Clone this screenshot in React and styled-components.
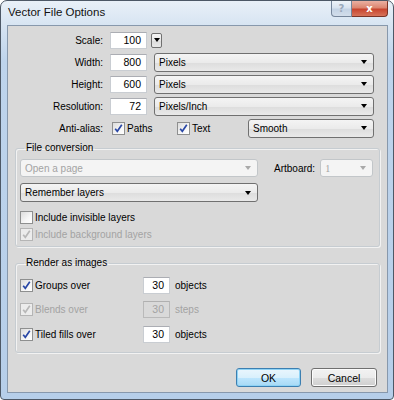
import React from 'react';
import styled, { createGlobalStyle } from 'styled-components';

const Global = createGlobalStyle`
  html, body { margin: 0; padding: 0; background: #fff; }
  body { font-family: "Liberation Sans", Arial, sans-serif; font-size: 10px; color: #000; }
  * { box-sizing: border-box; }
`;

const Window = styled.div`
  width: 394px;
  height: 400px;
  border: 1px solid #4d5866;
  border-radius: 7px 7px 4px 4px;
  background: linear-gradient(180deg, #e9f0f8 0px, #d7e4f2 24px, #bed4ec 60px, #b6cee9 100%);
  display: flex;
  flex-direction: column;
  overflow: hidden;
`;

const TitleBar = styled.div`
  height: 24px;
  display: flex;
  align-items: flex-start;
  padding-left: 7px;
  flex-shrink: 0;
`;

const Title = styled.div`
  font-size: 11.5px;
  line-height: 22px;
  color: #111;
  flex: 1;
`;

const Controls = styled.div`
  display: flex;
  margin-right: 5px;
`;

const CtrlBtn = styled.div`
  height: 16px;
  width: ${p => p.$w}px;
  display: flex;
  align-items: center;
  justify-content: center;
  font-family: "DejaVu Sans", sans-serif;
  font-weight: bold;
  font-size: 10px;
  border: 1px solid ${p => (p.$close ? '#7a3326' : '#76869b')};
  border-top: none;
  border-left-width: ${p => (p.$close ? 0 : 1)}px;
  border-radius: ${p => (p.$close ? '0 0 4px 0' : '0 0 0 4px')};
  color: ${p => (p.$close ? '#fff' : '#9aa9bb')};
  background: ${p =>
    p.$close
      ? 'linear-gradient(180deg, #eab0a2 0%, #dc8670 45%, #c8452f 55%, #d6735a 100%)'
      : 'linear-gradient(180deg, #eef3f9 0%, #d9e3ef 45%, #c4d3e5 55%, #d3deeb 100%)'};
`;

const Client = styled.div`
  flex: 1;
  margin: 0 5px 6px 6px;
  border: 1px solid #8798ac;
  background: #d9d9d9;
  display: flex;
  flex-direction: column;
`;

const Top = styled.div`
  padding: 4px 13px 0 0;
  display: flex;
  flex-direction: column;
  gap: 2px;
`;

const Row = styled.div`
  height: 20px;
  display: flex;
  align-items: center;
`;

const Label = styled.div`
  width: 95px;
  text-align: right;
  margin-right: 7px;
  flex-shrink: 0;
`;

const Input = styled.div`
  width: ${p => p.$w || 37}px;
  height: 17px;
  line-height: 15px;
  text-align: right;
  padding-right: 5px;
  flex-shrink: 0;
  border: 1px solid ${p => (p.$disabled ? '#b9b9b9' : '#c9cdd2')};
  border-top-color: ${p => (p.$disabled ? '#b0b0b0' : '#abadb3')};
  background: ${p => (p.$disabled ? '#d9d9d9' : '#fff')};
  color: ${p => (p.$disabled ? '#a3a3a3' : '#000')};
  font-size: 10.5px;
`;

const Arrow = styled.span`
  width: 0;
  height: 0;
  border-left: 3.5px solid transparent;
  border-right: 3.5px solid transparent;
  border-top: 4px solid ${p => (p.$disabled ? '#a9a9a9' : '#000')};
  flex-shrink: 0;
`;

const DropBtn = styled.div`
  width: 11px;
  height: 15px;
  margin-left: 4px;
  display: flex;
  align-items: center;
  justify-content: center;
  border: 1px solid #707070;
  border-radius: 2px;
  background: linear-gradient(180deg, #f4f4f4 0%, #e8e8e8 50%, #dcdcdc 51%, #e8e8e8 100%);
`;

const SelectBox = styled.div`
  width: ${p => (p.$w ? `${p.$w}px` : 'auto')};
  flex: ${p => (p.$w ? '0 0 auto' : '1')};
  height: ${p => p.$h || 19}px;
  margin-left: ${p => p.$ml || 0}px;
  display: flex;
  align-items: center;
  justify-content: space-between;
  padding: 0 6px 0 4px;
  border: 1px solid ${p => (p.$disabled ? '#c2c6c9' : '#707070')};
  border-radius: 3px;
  color: ${p => (p.$disabled ? '#a3a3a3' : '#000')};
  background: ${p =>
    p.$disabled
      ? '#f4f4f4'
      : 'linear-gradient(180deg, #f4f4f4 0%, #ebebeb 50%, #dddddd 51%, #e9e9e9 100%)'};
  font-size: 10px;
`;

const Select = ({ children, disabled, ...rest }) => (
  <SelectBox $disabled={disabled} {...rest}>
    <span>{children}</span>
    <Arrow $disabled={disabled} />
  </SelectBox>
);

const Box = styled.span`
  width: 13px;
  height: 13px;
  flex-shrink: 0;
  display: inline-flex;
  border: 1px solid ${p => (p.$disabled ? '#b5b5b5' : '#8e8f8f')};
  background: ${p =>
    p.$disabled ? '#ececec' : 'linear-gradient(135deg, #dcdcdc 0%, #f6f6f6 60%, #fff 100%)'};
`;

const CheckLabel = styled.div`
  display: flex;
  align-items: center;
  gap: 2px;
  width: ${p => (p.$w ? `${p.$w}px` : 'auto')};
  margin-left: ${p => p.$ml || 0}px;
  flex-shrink: 0;
  color: ${p => (p.$disabled ? '#a3a3a3' : '#000')};
  font-size: 10px;
`;

const Check = ({ checked, disabled, children, ...rest }) => (
  <CheckLabel $disabled={disabled} {...rest}>
    <Box $disabled={disabled}>
      {checked && (
        <svg width="11" height="11" viewBox="0 0 11 11">
          <path
            d="M2.2 5.8 L4.3 8.3 L8.8 1.8"
            fill="none"
            stroke={disabled ? '#b8b8b8' : '#2a48a6'}
            strokeWidth="1.7"
          />
        </svg>
      )}
    </Box>
    <span>{children}</span>
  </CheckLabel>
);

const Group = styled.fieldset`
  margin: ${p => p.$mt}px 7px 0 7px;
  min-width: 0;
  padding: ${p => p.$pad};
  border: 1px solid #c6ccd1;
  border-radius: 3px;
  box-shadow: inset 1px 1px 0 #f2f2f2, 1px 1px 0 #f2f2f2;
  display: flex;
  flex-direction: column;
`;

const Legend = styled.legend`
  padding: 0 2px;
  margin-left: 4px;
  font-size: 10px;
  line-height: 12px;
`;

const GRow = styled.div`
  height: ${p => p.$h || 20}px;
  margin-top: ${p => p.$mt || 0}px;
  display: flex;
  align-items: center;
`;

const Side = styled.span`
  margin-left: 16px;
  margin-right: 5px;
  font-size: 10px;
`;

const Unit = styled.span`
  margin-left: 5px;
  font-size: 10px;
  color: ${p => (p.$disabled ? '#a3a3a3' : '#000')};
`;

const Buttons = styled.div`
  display: flex;
  justify-content: flex-end;
  gap: 10px;
  margin-top: 15px;
  padding-right: 10px;
`;

const Button = styled.div`
  width: ${p => p.$w}px;
  height: 19px;
  display: flex;
  align-items: center;
  justify-content: center;
  font-size: 10.5px;
  border-radius: 3px;
  border: 1px solid ${p => (p.$primary ? '#3c7fb1' : '#707070')};
  background: ${p =>
    p.$primary
      ? 'linear-gradient(180deg, #eaf6fd 0%, #d9f0fc 50%, #bee6fd 51%, #a7d9f5 100%)'
      : 'linear-gradient(180deg, #f2f2f2 0%, #ebebeb 50%, #dddddd 51%, #cfcfcf 100%)'};
  box-shadow: ${p => (p.$primary ? 'inset 0 0 0 1px #8fd3f5' : 'inset 0 0 0 1px #fcfcfc')};
`;

export default function App() {
  return (
    <>
      <Global />
      <Window>
        <TitleBar>
          <Title>Vector File Options</Title>
          <Controls>
            <CtrlBtn $w={21}>?</CtrlBtn>
            <CtrlBtn $w={36} $close>x</CtrlBtn>
          </Controls>
        </TitleBar>
        <Client>
          <Top>
            <Row>
              <Label>Scale:</Label>
              <Input>100</Input>
              <DropBtn>
                <Arrow />
              </DropBtn>
            </Row>
            <Row>
              <Label>Width:</Label>
              <Input>800</Input>
              <Select $ml={7}>Pixels</Select>
            </Row>
            <Row>
              <Label>Height:</Label>
              <Input>600</Input>
              <Select $ml={7}>Pixels</Select>
            </Row>
            <Row>
              <Label>Resolution:</Label>
              <Input>72</Input>
              <Select $ml={7}>Pixels/Inch</Select>
            </Row>
            <Row>
              <Label>Anti-alias:</Label>
              <Check checked $w={65} $ml={2}>Paths</Check>
              <Check checked $w={71}>Text</Check>
              <Select>Smooth</Select>
            </Row>
          </Top>

          <Group $mt={4} $pad="5px 6px 3px 4px">
            <Legend>File conversion</Legend>
            <GRow $h={18}>
              <Select $w={238} $h={18} disabled>Open a page</Select>
              <Side>Artboard:</Side>
              <Select $w={53} $h={18} disabled>
                <span style={{ fontFamily: '"Liberation Serif", serif' }}>1</span>
              </Select>
            </GRow>
            <GRow $h={19} $mt={6}>
              <Select $w={238}>Remember layers</Select>
            </GRow>
            <GRow $h={17} $mt={7}>
              <Check>Include invisible layers</Check>
            </GRow>
            <GRow $h={17}>
              <Check checked disabled>Include background layers</Check>
            </GRow>
          </Group>

          <Group $mt={10} $pad="6px 6px 8px 4px">
            <Legend>Render as images</Legend>
            <GRow $h={20}>
              <Check checked $w={123}>Groups over</Check>
              <Input $w={27}>30</Input>
              <Unit>objects</Unit>
            </GRow>
            <GRow $h={20} $mt={4}>
              <Check checked disabled $w={123}>Blends over</Check>
              <Input $w={27} $disabled>30</Input>
              <Unit $disabled>steps</Unit>
            </GRow>
            <GRow $h={20} $mt={5}>
              <Check checked $w={123}>Tiled fills over</Check>
              <Input $w={27}>30</Input>
              <Unit>objects</Unit>
            </GRow>
          </Group>

          <Buttons>
            <Button $w={65} $primary>OK</Button>
            <Button $w={66}>Cancel</Button>
          </Buttons>
        </Client>
      </Window>
    </>
  );
}
